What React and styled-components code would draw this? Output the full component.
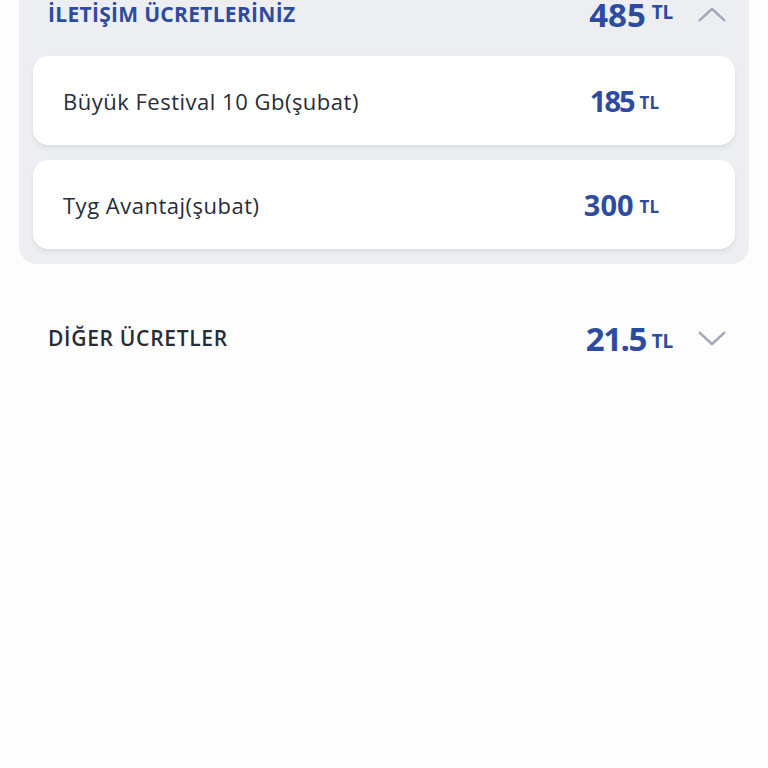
import styled, { createGlobalStyle } from "styled-components";

const GlobalStyle = createGlobalStyle`
  html, body {
    margin: 0;
    padding: 0;
    background: #fdfdfd;
    font-family: "Open Sans", "Noto Sans", sans-serif;
  }
`;

const items = [
  { name: "Büyük Festival 10 Gb(şubat)", price: "185" },
  { name: "Tyg Avantaj(şubat)", price: "300" },
];

function Chevron({ up }) {
  return (
    <ChevronBox viewBox="0 0 30 18" aria-hidden="true">
      <path
        d={up ? "M2 15 L15 3 L28 15" : "M2 3 L15 15 L28 3"}
        fill="none"
        stroke="#a2a7b9"
        strokeWidth="2.8"
        strokeLinecap="round"
        strokeLinejoin="round"
      />
    </ChevronBox>
  );
}

export default function App() {
  return (
    <>
      <GlobalStyle />
      <Page>
        <Panel>
          <Header>
            <Title $accent>İLETİŞİM ÜCRETLERİNİZ</Title>
            <Amount>
              <Big>485</Big>
              <Unit $raise={8}>TL</Unit>
            </Amount>
            <Chevron up />
          </Header>
          <List>
            {items.map((it) => (
              <Card key={it.name}>
                <ItemName>{it.name}</ItemName>
                <Amount>
                  <Mid $tight={it.price.startsWith("1")}>{it.price}</Mid>
                  <SmallUnit>TL</SmallUnit>
                </Amount>
              </Card>
            ))}
          </List>
        </Panel>
        <Section>
          <Title>DİĞER ÜCRETLER</Title>
          <Amount>
            <Big $tight>21.5</Big>
            <Unit $raise={3}>TL</Unit>
          </Amount>
          <Chevron />
        </Section>
      </Page>
    </>
  );
}

const Page = styled.div`
  padding: 0 19px;
  min-height: 768px;
  box-sizing: border-box;
  overflow: hidden;
`;

const Panel = styled.div`
  background: #eceef2;
  border-radius: 0 0 18px 18px;
  padding: 0 14px 15px;
  margin-top: -8px;
`;

const Header = styled.div`
  display: flex;
  align-items: center;
  height: 44px;
  padding: 0 9px 0 15px;
  margin-bottom: 20px;
`;

const Section = styled.div`
  display: flex;
  align-items: center;
  height: 40px;
  margin-top: 54px;
  padding: 0 23px 0 29px;
`;

const Title = styled.div`
  flex: 1;
  font-size: 21px;
  font-weight: ${(p) => (p.$accent ? 700 : 600)};
  color: ${(p) => (p.$accent ? "#2e4c9f" : "#272c37")};
  letter-spacing: ${(p) => (p.$accent ? "0.3px" : "0.7px")};
`;

const Amount = styled.div`
  display: flex;
  align-items: baseline;
  color: #2e4c9f;
  font-weight: 700;
  line-height: 1;
`;

const Big = styled.span`
  font-size: 33px;
  letter-spacing: ${(p) => (p.$tight ? "-1.5px" : "0")};
`;

const Mid = styled.span`
  font-size: 29px;
  letter-spacing: ${(p) => (p.$tight ? "-2px" : "0")};
`;

const Unit = styled.span`
  font-size: 19px;
  margin-left: 6px;
  letter-spacing: -0.3px;
  position: relative;
  top: -${(p) => p.$raise}px;
`;

const SmallUnit = styled.span`
  font-size: 17px;
  margin-left: 6px;
  position: relative;
  top: -3px;
`;

const ChevronBox = styled.svg`
  width: 28px;
  height: 17px;
  margin-left: 25px;
`;

const List = styled.div`
  display: flex;
  flex-direction: column;
  gap: 15px;
`;

const Card = styled.div`
  display: flex;
  align-items: center;
  height: 89px;
  padding: 0 76px 0 30px;
  background: #ffffff;
  border-radius: 15px;
  box-shadow: 0 2px 4px rgba(40, 50, 70, 0.1);
`;

const ItemName = styled.div`
  flex: 1;
  font-size: 22px;
  font-weight: 500;
  letter-spacing: 0.5px;
  color: #272c37;
`;
